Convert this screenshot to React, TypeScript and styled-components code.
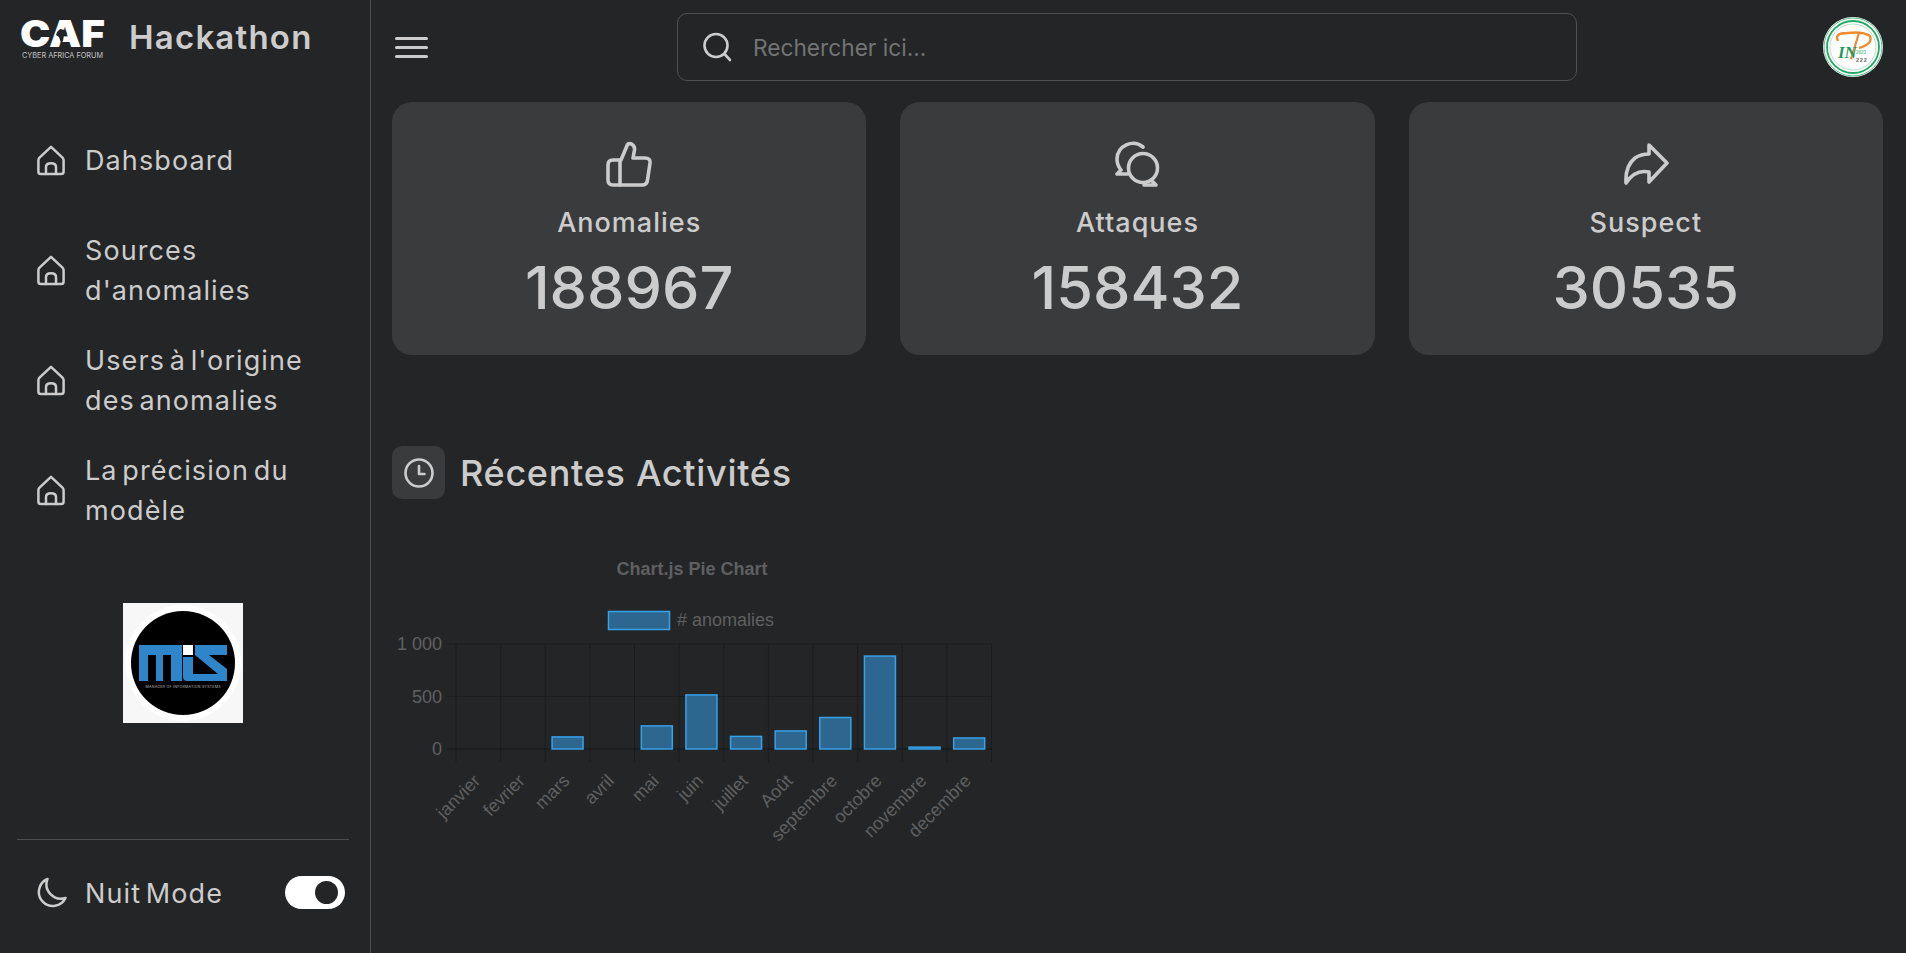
import React from "react";
import styled, { createGlobalStyle } from "styled-components";

const Global = createGlobalStyle`
  html, body { margin: 0; padding: 0; height: 100%; background: #242526; overflow: hidden; }
  * { box-sizing: border-box; }
  body { font-family: Inter, "Open Sans", sans-serif; color: #ccc; }
`;

const Page = styled.div`display: flex; width: 100%; height: 953px; background: #242526;`;

const Sidebar = styled.aside`
  width: 371px; flex: none; height: 953px; display: flex; flex-direction: column;
  border-right: 1px solid #4d4e4f;
`;
const Brand = styled.div`height: 120px; padding: 12px 0 0 20px; display: flex; align-items: flex-start; gap: 23px;`;
const BrandName = styled.span`font-size: 33px; font-weight: 600; letter-spacing: 1.2px; line-height: 50px; color: #ccc;`;
const NavList = styled.ul`list-style: none; margin: 0; padding: 0; display: flex; flex-direction: column; gap: 30px;`;
const NavRow = styled.li`height: 80px; padding-left: 37px; display: flex; align-items: center; gap: 20px;`;
const NavLabel = styled.span`font-size: 27px; font-weight: 400; letter-spacing: 1.1px; word-spacing: -4px; line-height: 40px; padding-top: 2px; color: #ccc;`;
const LogoWrap = styled.div`margin: 73px 0 0 123px; width: 120px; height: 120px;`;
const Footer = styled.div`margin: auto 21px 0 17px; height: 114px; border-top: 1px solid #4d4e4f; display: flex; align-items: center; justify-content: space-between; padding: 0 4px 8px 19px;`;
const ModeGroup = styled.div`display: flex; align-items: center; gap: 18px;`;
const Toggle = styled.div`width: 60px; height: 33px; border-radius: 17px; background: #fff; position: relative;`;
const Knob = styled.span`position: absolute; right: 7px; top: 5px; width: 23px; height: 23px; border-radius: 50%; background: #242526;`;

const Main = styled.main`flex: 1; min-width: 0; padding: 0 23px 0 21px;`;
const TopBar = styled.header`height: 102px; padding: 0 0 8px 3px; display: flex; align-items: center; justify-content: space-between;`;
const Burger = styled.div`width: 33px; display: flex; flex-direction: column; gap: 6px;`;
const BurgerLine = styled.span`display: block; height: 3px; border-radius: 2px; background: #ccc;`;
const SearchBox = styled.label`width: 900px; height: 68px; margin-left: 3px; border: 1px solid #4f5051; border-radius: 10px; display: flex; align-items: center; gap: 19px; padding-left: 24px;`;
const SearchInput = styled.input`
  flex: 1; background: none; border: 0; outline: 0; font: 400 22.7px Inter, sans-serif; color: #ccc;
  &::placeholder { color: #737475; opacity: 1; }
`;
const Avatar = styled.div`width: 60px; height: 60px;`;

const Cards = styled.section`display: grid; grid-template-columns: repeat(3, 1fr); gap: 34px;`;
const Card = styled.article`height: 253px; border-radius: 20px; background: #3a3b3c; display: flex; flex-direction: column; align-items: center; padding-top: 38px;`;
const CardIcon = styled.div`height: 48px; display: flex; align-items: center;`;
const CardLabel = styled.div`font-size: 27px; font-weight: 500; letter-spacing: 1px; line-height: 38px; margin-top: 16px; color: #ccc;`;
const CardValue = styled.div`font-size: 59.5px; font-weight: 450; line-height: 72px; margin-top: 9px; color: #ccc;`;

const SectionTitle = styled.div`margin-top: 91px; display: flex; align-items: center; gap: 15px;`;
const ClockTile = styled.div`width: 53px; height: 53px; border-radius: 10px; background: #3a3b3c; display: flex; align-items: center; justify-content: center;`;
const Heading = styled.h2`margin: 0; font-size: 36px; font-weight: 500; letter-spacing: 0.7px; color: #ccc;`;
const ChartWrap = styled.div`margin-top: 51px; width: 630px; height: 300px;`;

const Home = () => (
  <svg width="28" height="31" viewBox="0 0 28 31" fill="none" stroke="#ccc" strokeWidth="2.5" strokeLinejoin="round" strokeLinecap="round">
    <path d="M14 1.8 L25.5 12.6 Q26.6 13.8 26.6 15.2 V26.4 Q26.6 29 24 29 H4 Q1.4 29 1.4 26.4 V15.2 Q1.4 13.8 2.5 12.6 Z" />
    <path d="M9 29 V22 Q9 18.2 14 18.2 Q19 18.2 19 22 V29" />
  </svg>
);

const items: React.ReactNode[] = [
  "Dahsboard",
  <>Sources<br />d'anomalies</>,
  <>Users à l'origine<br />des anomalies</>,
  <>La précision du<br />modèle</>,
];

const CafLogo = () => (
  <svg width="86" height="52" viewBox="0 -6 86 52">
    <text x="0" y="29" textLength="85" lengthAdjust="spacingAndGlyphs" fontFamily="Inter, sans-serif" fontWeight="900" fontSize="37" fill="#fff">CAF</text>
    <path d="M37 14 l3 -3 l5 1 l2 4 l-3 1 l-1 6 l-2 2 l-2 -6 l-3 -2 z" fill="#242526" />
    <text x="2" y="40" textLength="81" lengthAdjust="spacingAndGlyphs" fontFamily="Inter, sans-serif" fontSize="7.5" fill="#c4c4c4">CYBER AFRICA FORUM</text>
  </svg>
);

const MisLogo = () => (
  <svg width="120" height="120" viewBox="0 0 120 120">
    <rect width="120" height="120" fill="#f7f7f7" />
    <circle cx="60" cy="60" r="58" fill="#fff" />
    <circle cx="60" cy="60" r="52" fill="#000" />
    <path d="M16 42 H59 V78 H48 V52 H40 V78 H33 V52 H25 V78 H16 Z" fill="#2f85c9" />
    <rect x="60" y="42" width="10" height="10" fill="#fff" />
    <path d="M60 54 H70 V71 H95 L72 52 V42 H104 V52 H86 L104 66 V78 H64 Q60 78 60 74 Z" fill="#2f85c9" />
    <text x="60" y="84.5" textAnchor="middle" fontFamily="Inter, sans-serif" fontSize="3.6" fill="#bbb" textLength="75">MANAGER OF INFORMATION SYSTEMS</text>
  </svg>
);

const InpLogo = () => (
  <svg width="60" height="60" viewBox="0 0 60 60">
    <circle cx="30" cy="30" r="30" fill="#fff" />
    <circle cx="30" cy="30" r="29" fill="none" stroke="#5cc08b" strokeWidth="1" />
    <circle cx="30" cy="30" r="26" fill="none" stroke="#22a863" strokeWidth="1.8" />
    <circle cx="30" cy="30" r="23" fill="none" stroke="#9adab8" strokeWidth="0.8" />
    <path d="M15 24 Q11 16 24 16 Q40 14 47 19 Q50 27 36 31" fill="none" stroke="#f08a2c" strokeWidth="2.4" />
    <path d="M36 16 L28 42" fill="none" stroke="#f08a2c" strokeWidth="2.2" />
    <text x="15" y="41" fontFamily="'Liberation Serif', serif" fontStyle="italic" fontWeight="700" fontSize="17" fill="#1f9a5c">IN</text>
    <text x="33" y="37" fontFamily="'Liberation Sans', sans-serif" fontWeight="700" fontSize="4.5" fill="#6cc598">2023</text>
    <text x="33" y="45" fontFamily="'Liberation Sans', sans-serif" fontWeight="700" fontSize="5.5" letterSpacing="0.8" fill="#666">222</text>
  </svg>
);

const iconProps = { fill: "none", stroke: "#ccc", strokeWidth: 3.6, strokeLinejoin: "round" as const, strokeLinecap: "round" as const };

const Thumb = () => (
  <svg width="46" height="46" viewBox="0 0 46 46" {...iconProps}>
    <path d="M15 19 L21.5 3.5 Q23 2 25.5 3 Q29 5 28.5 9 L27 17 H39 Q44.5 17 44 22 L41.5 39 Q41 44 36 44 H7 Q2 44 2 39 V24 Q2 19 7 19 Z" />
    <path d="M14 19 V44" />
  </svg>
);
const Chat = () => (
  <svg width="46" height="46" viewBox="0 0 46 46" {...iconProps}>
    <path d="M29 6 A16 16 0 0 0 3 18 Q3 24 7 29 L3 33 H14" />
    <circle cx="29" cy="27" r="14.5" />
    <path d="M37 39 L42 44 H30" />
  </svg>
);
const Share = () => (
  <svg width="46" height="44" viewBox="0 0 46 44" {...iconProps}>
    <path d="M26 3 L44 21 L26 40 V30 Q12 27 3 41 Q2 24 12 16 Q18 12 26 12 Z" />
  </svg>
);

const cards = [
  { label: "Anomalies", value: "188967", icon: <Thumb /> },
  { label: "Attaques", value: "158432", icon: <Chat /> },
  { label: "Suspect", value: "30535", icon: <Share /> },
];

const months = ["janvier", "fevrier", "mars", "avril", "mai", "juin", "juillet", "Août", "septembre", "octobre", "novembre", "decembre"];
const values = [0, 0, 115, 0, 220, 515, 120, 172, 300, 885, 18, 105];

// chart origin on the page: (392, 550)
const Chart = () => {
  const left = 64, right = 599.5, top = 94, bottom = 199, zero = 199;
  const col = (right - left) / 12;
  const gridCol = "rgba(0,0,0,0.22)";
  const txt = "#5f6061";
  const font = "'Liberation Sans', sans-serif";
  return (
    <svg width="630" height="300" viewBox="0 0 630 300">
      <text x="300" y="25" textAnchor="middle" fontFamily={font} fontWeight="700" fontSize="18" fill={txt}>Chart.js Pie Chart</text>
      <rect x="216.5" y="61.5" width="61" height="18" fill="#2d668f" stroke="#36a2eb" strokeWidth="1.5" />
      <text x="285" y="76" fontFamily={font} fontSize="18" fill={txt}>
        # anomalies
      </text>
      {Array.from({ length: 13 }).map((_, i) => (
        <line key={i} x1={left + i * col} x2={left + i * col} y1={top} y2={bottom + 13} stroke={gridCol} />
      ))}
      {[0, 500, 1000].map((v, i) => {
        const y = bottom - i * 52.5;
        return (
          <g key={v}>
            <line x1={left - 9} x2={right} y1={y} y2={y} stroke={v === 0 ? "rgba(0,0,0,0.4)" : gridCol} />
            <text x={left - 14} y={y + 6} textAnchor="end" fontFamily={font} fontSize="18" fill={txt}>
              {v === 1000 ? "1 000" : v}
            </text>
          </g>
        );
      })}
      {values.map((v, i) => {
        if (!v) return null;
        const h = v * 0.105;
        const cx = left + col * (i + 0.5);
        return <rect key={i} x={cx - 15.5} y={zero - h} width={31} height={h} fill="#2d668f" stroke="#36a2eb" strokeWidth="1.5" />;
      })}
      {months.map((m, i) => {
        const cx = left + col * (i + 0.5) + 3;
        return (
          <text key={m} x={cx} y={232} textAnchor="end" fontFamily={font} fontSize="18" fill={txt} transform={`rotate(-45 ${cx} 232)`}>
            {m}
          </text>
        );
      })}
    </svg>
  );
};

export default function App() {
  return (
    <Page>
      <Global />
      <Sidebar>
        <Brand>
          <CafLogo />
          <BrandName>Hackathon</BrandName>
        </Brand>
        <NavList>
          {items.map((t, i) => (
            <NavRow key={i}>
              <Home />
              <NavLabel>{t}</NavLabel>
            </NavRow>
          ))}
        </NavList>
        <LogoWrap>
          <MisLogo />
        </LogoWrap>
        <Footer>
          <ModeGroup>
            <svg width="31" height="31" viewBox="0 0 31 31" fill="none" stroke="#ccc" strokeWidth="2.5" strokeLinejoin="round">
              <path d="M11.5 2 A14 14 0 1 0 29.5 21 A14.5 14.5 0 0 1 11.5 2 Z" />
            </svg>
            <NavLabel>Nuit Mode</NavLabel>
          </ModeGroup>
          <Toggle>
            <Knob />
          </Toggle>
        </Footer>
      </Sidebar>
      <Main>
        <TopBar>
          <Burger>
            <BurgerLine />
            <BurgerLine />
            <BurgerLine />
          </Burger>
          <SearchBox>
            <svg width="30" height="30" viewBox="0 0 30 30" fill="none" stroke="#ccc" strokeWidth="2.6" strokeLinecap="round">
              <circle cx="14" cy="13.5" r="11.5" />
              <path d="M22.5 22 L28 28" />
            </svg>
            <SearchInput placeholder="Rechercher ici..." readOnly />
          </SearchBox>
          <Avatar>
            <InpLogo />
          </Avatar>
        </TopBar>
        <Cards>
          {cards.map((c) => (
            <Card key={c.label}>
              <CardIcon>{c.icon}</CardIcon>
              <CardLabel>{c.label}</CardLabel>
              <CardValue>{c.value}</CardValue>
            </Card>
          ))}
        </Cards>
        <SectionTitle>
          <ClockTile>
            <svg width="32" height="32" viewBox="0 0 32 32" fill="none" stroke="#ccc" strokeWidth="2.6" strokeLinecap="round" strokeLinejoin="round">
              <circle cx="16" cy="16" r="13.5" />
              <path d="M16 9 V17 H21.5" />
            </svg>
          </ClockTile>
          <Heading>Récentes Activités</Heading>
        </SectionTitle>
        <ChartWrap>
          <Chart />
        </ChartWrap>
      </Main>
    </Page>
  );
}
